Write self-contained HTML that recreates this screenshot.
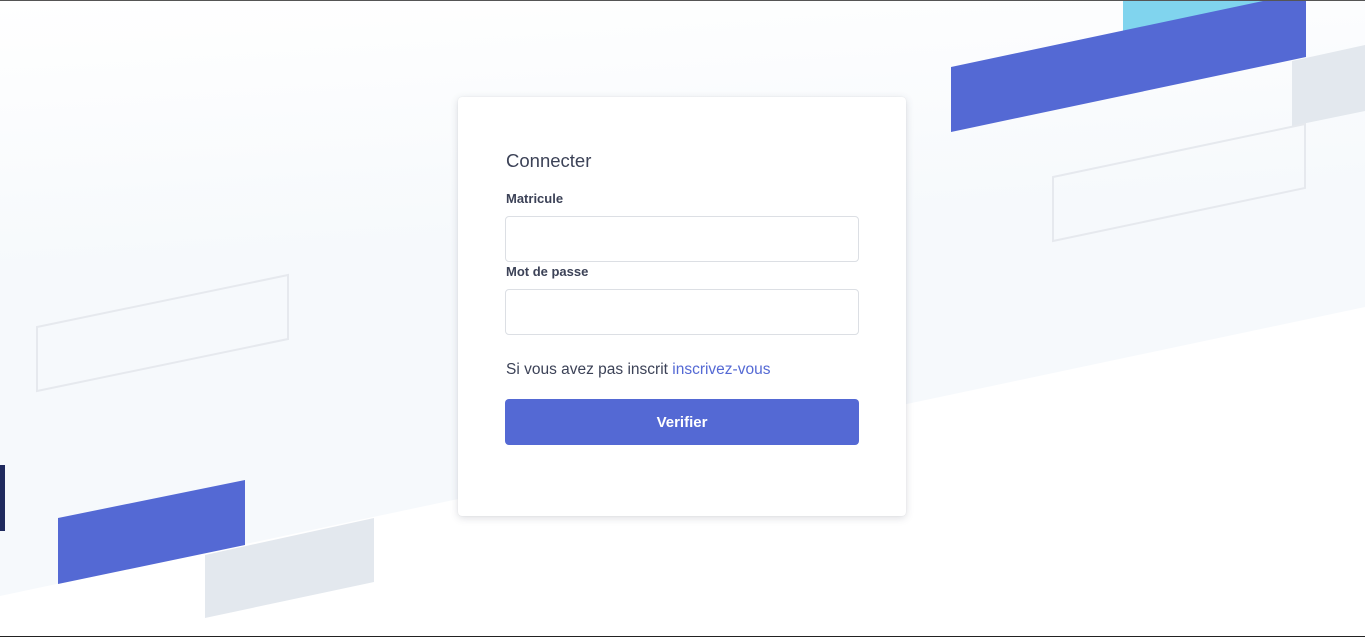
<!DOCTYPE html>
<html><head><meta charset="utf-8"><style>
*{box-sizing:border-box;margin:0;padding:0}
html,body{width:1365px;height:637px;overflow:hidden;background:#fff;font-family:"Liberation Sans",sans-serif}
svg.bg{position:absolute;left:0;top:0}
.topline{position:absolute;left:0;top:0;width:1365px;height:1px;background:#555}
.botline{position:absolute;left:0;top:636px;width:1365px;height:1px;background:#222}
.card{position:absolute;left:458px;top:97px;width:448px;height:419px;background:#fff;border-radius:4px;box-shadow:0 2px 8px rgba(60,66,87,.18),0 0 1px rgba(0,0,0,.1)}
.t{position:absolute;left:48px;color:#3c4257}
.inp{position:absolute;left:47px;width:354px;height:46px;border:1px solid #dcdfe4;border-radius:4px;background:#fff}
.btn{position:absolute;left:47px;top:302px;width:354px;height:46px;background:#5469d4;border-radius:4px;color:#fff;font-weight:bold;font-size:15px;text-align:center;line-height:48px}
</style></head><body>
<svg class="bg" width="1365" height="637">
<defs><linearGradient id="g" x1="0" y1="0" x2="0.15" y2="1" gradientUnits="objectBoundingBox">
<stop offset="0" stop-color="#fff"/><stop offset="0.45" stop-color="#f6f9fc"/><stop offset="1" stop-color="#f6f9fc"/></linearGradient></defs>
<polygon points="0,0 1365,0 1365,307 0,596" fill="url(#g)"/>
<rect x="1123" y="0" width="142" height="40" fill="#80d4ee"/>
<polygon points="951,67 1263,1 1306,1 1306,57 951,132" fill="#5469d4"/>
<polygon points="1292,61 1365,45 1365,111 1292,126" fill="#e3e8ee"/>
<polygon points="1053,177 1305,124 1305,188 1053,241" fill="none" stroke="#e6e9ee" stroke-width="2"/>
<polygon points="37,327 288,275 288,339 37,391" fill="none" stroke="#e6e9ee" stroke-width="2"/>
<rect x="0" y="465" width="5" height="66" fill="#1f2a5e"/>
<polygon points="205,555 374,518 374,582 205,618" fill="#e3e8ee"/>
<polygon points="58,518 245,480 245,545 58,584" fill="#5469d4"/>
</svg>
<div class="topline"></div><div class="botline"></div>
<div class="card">
<div class="t" style="top:53px;font-size:18.5px">Connecter</div>
<div class="t" style="top:94px;font-size:13px;font-weight:bold;color:#3c4257">Matricule</div>
<div class="inp" style="top:119px"></div>
<div class="t" style="top:167px;font-size:13px;font-weight:bold">Mot de passe</div>
<div class="inp" style="top:192px"></div>
<div class="t" style="top:264px;font-size:15.5px">Si vous avez pas inscrit <span style="color:#5469d4">inscrivez-vous</span></div>
<div class="btn">Verifier</div>
</div>
</body></html>
